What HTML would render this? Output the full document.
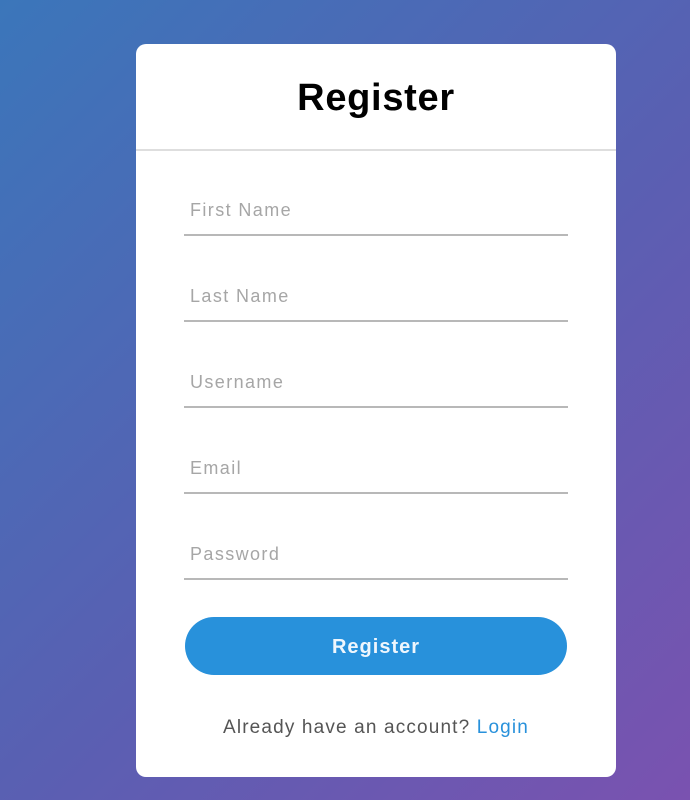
<!DOCTYPE html>
<html><head><style>
html,body{margin:0;width:690px;height:800px;overflow:hidden}
body{background:linear-gradient(135deg,#3b76ba 0%,#5a5fb2 55%,#7a52b0 100%);font-family:"Liberation Sans",sans-serif;position:relative}
.card{position:absolute;left:136px;top:44px;width:480px;height:733px;background:#fff;border-radius:10px}
h1{position:absolute;left:0;right:0;margin:0;text-align:center;font-size:38px;font-weight:bold;color:#000;line-height:44px;top:32px;letter-spacing:0.7px}
.div{position:absolute;left:0;right:0;top:105px;height:2px;background:#dedede}
.f{position:absolute;left:48px;width:384px;height:2px;background:#b8b8b8}
.p{position:absolute;left:54px;font-size:18px;color:#a6a6a6;line-height:22px;letter-spacing:1.4px}
.btn{position:absolute;left:49px;top:573px;width:382px;height:58px;border-radius:29px;background:#2891db;color:#eef6fd;font-weight:bold;font-size:20px;text-align:center;line-height:60px;letter-spacing:1px}
.t{position:absolute;left:0;right:0;top:673px;text-align:center;font-size:19px;color:#555;line-height:22px;letter-spacing:1.15px}
.t span{color:#2891db}
</style></head><body>
<div class="card">
<h1>Register</h1>
<div class="div"></div>
<div class="p" style="top:155px">First Name</div><div class="f" style="top:190px"></div>
<div class="p" style="top:241px">Last Name</div><div class="f" style="top:276px"></div>
<div class="p" style="top:327px">Username</div><div class="f" style="top:362px"></div>
<div class="p" style="top:413px">Email</div><div class="f" style="top:448px"></div>
<div class="p" style="top:499px">Password</div><div class="f" style="top:534px"></div>
<div class="btn">Register</div>
<div class="t">Already have an account? <span>Login</span></div>
</div>
</body></html>
